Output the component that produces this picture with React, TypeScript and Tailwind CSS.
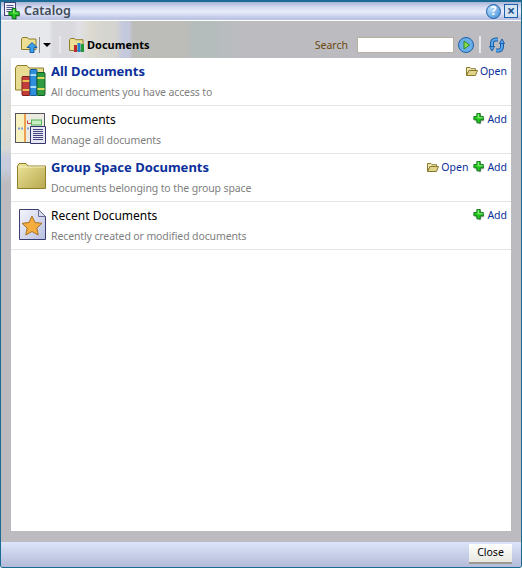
import React from 'react';

const PlusIcon = ({ size = 14 }: { size?: number }) => (
  <svg width={size} height={size} viewBox="0 0 14 14" className="shrink-0">
    <path d="M6.500 3h3v3h3.500v3.500H9.500V13h-3V9.500H3V6h3.500z" fill="#6f7f6f" opacity="0.6" />
    <path d="M4.500.5h4v3.500H12v4H8.500V11.500h-4V8H1V4h3.500z" fill="#22c61e" stroke="#0a6a12" strokeWidth="1" />
    <path d="M5.500 1.500h1.500v3.500H11v1H5.500z" fill="#8ef07a" />
  </svg>
);

const OpenFolderIcon = () => (
  <svg width="12" height="11" viewBox="0 0 12 11" className="shrink-0">
    <path d="M.5 1.500h3.500l1 1.200h4.500v1.800H3L.5 9.500z" fill="#f0e8b0" stroke="#8a7a30" />
    <path d="M.5 9.500 3 4.500h8.500l-2 5z" fill="#e0d48a" stroke="#8a7a30" />
  </svg>
);

const SmallFolderBooks = () => (
  <svg width="16" height="16" viewBox="0 0 16 16" className="shrink-0">
    <path d="M.5 2.500 1.500 1.500h4l1 1.200h7.500v10.800H.5z" fill="#ecdf94" stroke="#8f7f2a" />
    <rect x="5" y="8" width="3" height="7" fill="#c02a2a" />
    <rect x="8.500" y="6" width="3" height="9" fill="#1f7fd0" />
    <rect x="12" y="7" width="3" height="8" fill="#229a3a" />
  </svg>
);

const UpFolderIcon = () => (
  <svg width="17" height="16" viewBox="0 0 17 16" className="shrink-0">
    <path d="M.5 2 1.500.5h5l1 1.500h7.500v10.500H.5z" fill="#ecdf94" stroke="#8f7f2a" />
    <path d="M11 5.500 16 10.500h-3V15.500H9v-5H6z" fill="#3fa0ea" stroke="#1a5fa8" />
  </svg>
);

const AllDocsIcon = () => (
  <svg width="31" height="31" viewBox="0 0 31 31" className="shrink-0">
    <path d="M.5 3 2 .5h10l2 2.500h14.500v22H.5z" fill="#e8dc92" stroke="#8f7f2a" />
    <rect x="7" y="11.500" width="8" height="19" rx="1" fill="#c23c3c" stroke="#7a1c1c" />
    <rect x="7.500" y="15" width="7" height="2" fill="#e8c050" />
    <rect x="7.500" y="24" width="7" height="2" fill="#e8c050" />
    <rect x="15" y="4.500" width="7" height="26" rx="1" fill="#2f8fdc" stroke="#155a9c" />
    <rect x="15.500" y="9" width="6" height="2" fill="#a8dcf8" />
    <rect x="15.500" y="21" width="6" height="2" fill="#a8dcf8" />
    <rect x="22" y="7.500" width="8" height="23" rx="1" fill="#2f9a40" stroke="#125c20" />
    <rect x="22.500" y="12" width="7" height="2" fill="#e0d860" />
    <rect x="22.500" y="23" width="7" height="2" fill="#e0d860" />
  </svg>
);

const ManageDocsIcon = () => (
  <svg width="31" height="31" viewBox="0 0 31 31" className="shrink-0">
    <rect x=".5" y=".5" width="29" height="29" fill="#ecebe2" stroke="#55555f" />
    <rect x="1" y="1" width="8" height="28" fill="#f8f2c0" />
    <rect x="9" y="1" width="2" height="28" fill="#eda050" />
    <path d="M12.500 7.500V10.500H16" stroke="#d04040" fill="none" />
    <rect x="16.500" y="7" width="10" height="5" fill="#c8eec4" stroke="#58b058" />
    <path d="M3 15.500h6M12 15.500h3" stroke="#7aa0e0" strokeDasharray="2 1" strokeWidth="2" />
    <path d="M15.500 13.500h15v17h-15z" fill="#e8e8f4" stroke="#35356e" />
    <path d="M18 16.500h10M18 18.500h10M18 20.500h10M18 22.500h10M18 24.500h10M18 26.500h10" stroke="#44447e" />
  </svg>
);

const FolderIcon = () => (
  <svg width="30" height="26" viewBox="0 0 30 26" className="mt-[2px] shrink-0">
    <defs>
      <linearGradient id="folder" x1="0" y1="0" x2="1" y2="1">
        <stop offset="0" stopColor="#ece59a" />
        <stop offset="1" stopColor="#b8a84e" />
      </linearGradient>
    </defs>
    <path d="M1.500 3 3 .5h7L12 3h17.500v22.500h-28z" fill="url(#folder)" stroke="#8f7f2a" />
    <path d="M2 4h27" stroke="#f6f0c0" />
  </svg>
);

const RecentIcon = () => (
  <svg width="27" height="31" viewBox="0 0 27 31" className="shrink-0">
    <defs>
      <linearGradient id="page" x1="0" y1="0" x2="1" y2="1">
        <stop offset="0" stopColor="#f4f5fc" />
        <stop offset="1" stopColor="#b8bfdf" />
      </linearGradient>
    </defs>
    <path d="M.5.500h19l7 7v23H.5z" fill="url(#page)" stroke="#3c3c70" />
    <path d="M19.500.500v7h7z" fill="#d8dcec" stroke="#6a6a90" />
    <path d="M13 7l3 6.500 7 .8-5.200 4.700 1.400 7L13 22.500l-6.200 3.500 1.400-7L3 14.300l7-.8z" fill="#f5ad3e" stroke="#a8722a" />
  </svg>
);

const GoIcon = () => (
  <svg width="16" height="16" viewBox="0 0 16 16" className="shrink-0">
    <circle cx="8" cy="8" r="7.500" fill="#68aee8" stroke="#1c5fa8" />
    <path d="M6 4v8l5.500-4z" fill="#8ae050" stroke="#2e8a1c" />
  </svg>
);

const RefreshIcon = () => (
  <svg width="16" height="16" viewBox="0 0 16 16" className="shrink-0">
    <path d="M3 10V6a3.500 3.500 0 0 1 3.500-3.500H9" fill="none" stroke="#1c5fa8" strokeWidth="4" />
    <path d="M3 10V6a3.500 3.500 0 0 1 3.500-3.500H9" fill="none" stroke="#5aa8ea" strokeWidth="2" />
    <path d="M.5 9.500h5L3 14z" fill="#5aa8ea" stroke="#1c5fa8" />
    <path d="M13 6v4a3.500 3.500 0 0 1-3.500 3.500H7" fill="none" stroke="#1c5fa8" strokeWidth="4" />
    <path d="M13 6v4a3.500 3.500 0 0 1-3.500 3.500H7" fill="none" stroke="#5aa8ea" strokeWidth="2" />
    <path d="M10.500 6.500h5L13 2z" fill="#5aa8ea" stroke="#1c5fa8" />
  </svg>
);

const TitleIcon = () => (
  <div className="relative h-[18px] w-[17px] shrink-0">
    <svg width="12" height="14" viewBox="0 0 12 14">
      <rect x=".5" y=".5" width="11" height="13" fill="#f0f0fa" stroke="#44447a" />
      <path d="M2.500 3.500h7M2.500 5.500h7M2.500 7.500h7M2.500 9.500h3" stroke="#55558e" />
    </svg>
    <div className="absolute -bottom-[1px] right-0">
      <PlusIcon size={13} />
    </div>
  </div>
);

const rows = [
  { title: 'All Documents', sub: 'All documents you have access to', bold: true, icon: <AllDocsIcon />, open: true, add: false },
  { title: 'Documents', sub: 'Manage all documents', bold: false, icon: <ManageDocsIcon />, open: false, add: true },
  { title: 'Group Space Documents', sub: 'Documents belonging to the group space', bold: true, icon: <FolderIcon />, open: true, add: true },
  { title: 'Recent Documents', sub: 'Recently created or modified documents', bold: false, icon: <RecentIcon />, open: false, add: true },
];

const App = () => {
  return (
    <div className="h-[579px] w-[522px] overflow-hidden bg-white font-['Noto_Sans',sans-serif]">
      <div className="flex h-[568px] w-[522px] flex-col rounded-b-[3px] border border-t-2 border-[#1b6a94] bg-[#bcbcc0]">
        <div className="flex h-[19px] shrink-0 items-center justify-between border-b border-white bg-[linear-gradient(to_bottom,#a9b4d6_0%,#d6dcf2_30%,#e8ecfa_55%,#bcc5e4_90%)] pl-[3px] pr-[3px]">
          <div className="flex items-center gap-[3px]">
            <TitleIcon />
            <span className="text-[12.5px] font-semibold leading-none text-[#3f4b58]">Catalog</span>
          </div>
          <div className="flex items-center gap-[3px]">
            <div className="flex h-[15px] w-[15px] items-center justify-center rounded-full border border-[#1c5fa8] bg-[radial-gradient(circle_at_30%_30%,#b8dcf8,#3f8fd8)] text-[12px] font-bold leading-none text-white">?</div>
            <div className="flex h-[14px] w-[14px] items-center justify-center border border-[#1c5fa8] bg-[#d4e4f4] text-[14px] font-bold leading-none text-[#1a4f8a]">×</div>
          </div>
        </div>

        <div className="flex h-[37px] shrink-0 items-end justify-between bg-[linear-gradient(to_right,#e6e8ec_0px,#e6e8ec_48px,#dadade_52px,#dadade_72px,#e0e0e6_78px,#dcdad0_90px,#d6d6d0_100px,#d4d4d0_115px,#c4c8dc_122px,#c4c8dc_128px,#bcbcb8_132px,#bcbcb8_185px,#b4bcbc_195px,#b4bcbc_210px,#bcbcc0_240px)] pb-[5px] pl-[20px] pr-[15px]">
          <div className="flex items-center">
            <UpFolderIcon />
            <div className="ml-[1px] h-[16px] w-px bg-[#8a8a8a]" />
            <div className="ml-[3px] h-0 w-0 border-x-[4px] border-t-[4px] border-x-transparent border-t-black" />
            <div className="ml-[8px] h-[17px] w-[2px] bg-[#e8e8e8]" />
            <div className="ml-[8px]">
              <SmallFolderBooks />
            </div>
            <span className="ml-[2px] text-[11px] font-bold leading-[16px] text-black">Documents</span>
          </div>
          <div className="flex items-center">
            <span className="text-[10.5px] leading-[16px] text-[#6b4a10]">Search</span>
            <div className="ml-[9px] h-[16px] w-[97px] border border-[#b8b0a0] bg-white" />
            <div className="ml-[4px]">
              <GoIcon />
            </div>
            <div className="ml-[5px] h-[17px] w-[2px] bg-[#e8e8e8]" />
            <div className="ml-[8px] mr-[1px]">
              <RefreshIcon />
            </div>
          </div>
        </div>

        <div className="flex min-h-0 flex-1">
          <div className="w-[10px] shrink-0 bg-[linear-gradient(to_bottom,#e4e6e8_0px,#dadcdc_40px,#dcdcd2_70px,#d8d8d4_90px,#c8ccdc_100px,#c8ccdc_110px,#bcbcc0_125px)]" />
          <div className="flex-1 bg-white">
            {rows.map((row) => (
              <div key={row.title} className="flex h-[48px] border-b border-[#e4e4e4] pr-[4px]">
                <div className="flex w-[40px] shrink-0 items-start justify-end pr-[5px] pt-[7px]">{row.icon}</div>
                <div className="flex-1 pt-[4px]">
                  <div className={row.bold ? 'h-[20px] text-[13px] font-bold leading-[18px] text-[#0a2f9a]' : 'h-[20px] text-[12px] leading-[20px] text-black'}>
                    {row.title}
                  </div>
                  <div className="mt-[2px] text-[10.5px] leading-[16px] tracking-[-0.12px] text-[#808080]">{row.sub}</div>
                </div>
                <div className="flex items-start gap-[5px] pt-[6px] text-[10.5px] leading-[14px] text-[#0a2f9a]">
                  {row.open && (
                    <span className="flex items-center gap-[2px]">
                      <OpenFolderIcon />
                      Open
                    </span>
                  )}
                  {row.add && (
                    <span className="flex items-center gap-[2px]">
                      <PlusIcon size={12} />
                      Add
                    </span>
                  )}
                </div>
              </div>
            ))}
          </div>
          <div className="w-[10px] shrink-0" />
        </div>

        <div className="h-[11px] shrink-0" />
        <div className="flex h-[25px] shrink-0 items-start justify-end rounded-b-[2px] bg-gradient-to-b from-[#dde5fa] to-[#b3bbd8] pr-[9px] pt-[2px]">
          <button className="flex h-[20px] w-[43px] items-center justify-center border-b-2 border-[#9a9a90] bg-gradient-to-b from-white to-[#e8e8e0] text-[10.5px] text-black">
            Close
          </button>
        </div>
      </div>
    </div>
  );
};

export default App;
